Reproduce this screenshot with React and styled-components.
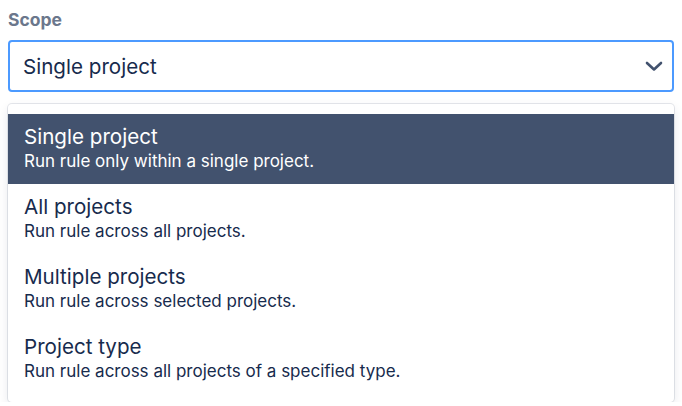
import React from "react";
import styled, { createGlobalStyle } from "styled-components";

const Global = createGlobalStyle`
  html, body { margin: 0; padding: 0; background: #ffffff; }
  body { font-family: Inter, "Noto Sans", Arial, sans-serif; color: #172b4d; }
`;

const Page = styled.div`
  padding: 10px 8px 0 8px;
  display: flex;
  flex-direction: column;
`;

const Label = styled.div`
  font-size: 17.5px;
  font-weight: 700;
  line-height: 20px;
  color: #6b778c;
  margin-bottom: 10px;
`;

const Select = styled.div`
  box-sizing: border-box;
  height: 52px;
  border: 2px solid #4c9aff;
  border-radius: 4px;
  display: flex;
  align-items: center;
  justify-content: space-between;
  padding: 0 6px 0 13px;
  font-size: 20.6px;
  color: #172b4d;
`;

const Menu = styled.div`
  margin-top: 12px;
  border-radius: 4px;
  background: #fff;
  padding: 10px 0 8px;
  box-shadow: 0 0 0 1px rgba(9, 30, 66, 0.1), 0 4px 11px rgba(9, 30, 66, 0.1);
  display: flex;
  flex-direction: column;
`;

const Option = styled.div`
  height: 70px;
  box-sizing: border-box;
  padding: 9px 16px 0 16px;
  background: ${(p) => (p.$selected ? "#42526e" : "transparent")};
  color: ${(p) => (p.$selected ? "#ffffff" : "#172b4d")};
  display: flex;
  flex-direction: column;
`;

const Title = styled.div`
  font-size: 20.6px;
  line-height: 27px;
`;

const Desc = styled.div`
  font-size: 17px;
  line-height: 22px;
`;

const options = [
  { t: "Single project", d: "Run rule only within a single project.", s: true },
  { t: "All projects", d: "Run rule across all projects." },
  { t: "Multiple projects", d: "Run rule across selected projects." },
  { t: "Project type", d: "Run rule across all projects of a specified type." },
];

export default function App() {
  return (
    <>
      <Global />
      <Page>
        <Label>Scope</Label>
        <Select>
          <span>Single project</span>
          <svg width="24" height="24" viewBox="0 0 24 24" fill="none">
            <path d="M5 9l7 6.5L19 9" stroke="#42526e" strokeWidth="2.6" strokeLinecap="round" strokeLinejoin="round" />
          </svg>
        </Select>
        <Menu>
          {options.map((o) => (
            <Option key={o.t} $selected={o.s}>
              <Title>{o.t}</Title>
              <Desc>{o.d}</Desc>
            </Option>
          ))}
        </Menu>
      </Page>
    </>
  );
}
